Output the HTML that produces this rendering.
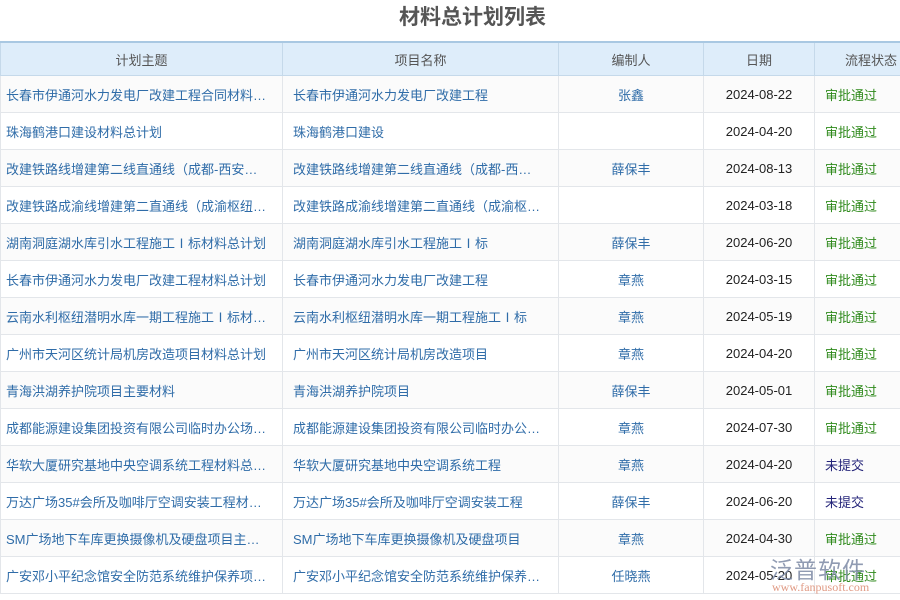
<!DOCTYPE html><html><head><meta charset="utf-8"><style>
body{margin:0;width:900px;height:600px;overflow:hidden;background:#fff;font-family:"Liberation Sans","Noto Sans CJK SC",sans-serif;}
h1{margin:0;height:41px;line-height:36px;text-align:center;font-size:21px;color:#555;font-weight:bold;padding-left:45px}
table{border-collapse:collapse;table-layout:fixed;width:915px;font-size:13px;}
th{background:#deedfa;color:#555;font-weight:normal;height:32px;padding:0;border:1px solid #c5d9ea;border-top:2px solid #a9c8e2}
td{height:36px;border:1px solid #e3e6ea;color:#2f6ca8;white-space:nowrap;overflow:hidden;text-overflow:ellipsis;padding:0 12px 0 5px}
tr:nth-child(even) td{background:#fbfbfb}
td.c{text-align:center;padding:0}td.d{text-align:center;color:#222;padding:0}
td.g{color:#2f8a1c;padding-left:10px}td.u{color:#25257a;padding-left:10px}
td.p{padding-left:10px;padding-right:14px}
.logo{position:absolute;left:770px;top:551px;font-size:23px;color:#7d8aa5;letter-spacing:1px;opacity:.85}
.url{position:absolute;left:772px;top:580px;font-size:12px;color:#e09a84;font-family:"Liberation Serif",serif}
</style></head><body>
<h1>材料总计划列表</h1>
<table><colgroup><col style="width:282px"><col style="width:276px"><col style="width:145px"><col style="width:111px"><col style="width:101px"></colgroup>
<tr><th>计划主题</th><th>项目名称</th><th>编制人</th><th>日期</th><th style="text-align:left;padding-left:30px">流程状态</th></tr>
<tr><td>长春市伊通河水力发电厂改建工程合同材料总计划</td><td class="p">长春市伊通河水力发电厂改建工程</td><td class="c">张鑫</td><td class="d">2024-08-22</td><td class="g">审批通过</td></tr>
<tr><td>珠海鹤港口建设材料总计划</td><td class="p">珠海鹤港口建设</td><td class="c"></td><td class="d">2024-04-20</td><td class="g">审批通过</td></tr>
<tr><td>改建铁路线增建第二线直通线（成都-西安）材料</td><td class="p">改建铁路线增建第二线直通线（成都-西安）</td><td class="c">薛保丰</td><td class="d">2024-08-13</td><td class="g">审批通过</td></tr>
<tr><td>改建铁路成渝线增建第二直通线（成渝枢纽材料</td><td class="p">改建铁路成渝线增建第二直通线（成渝枢纽）</td><td class="c"></td><td class="d">2024-03-18</td><td class="g">审批通过</td></tr>
<tr><td>湖南洞庭湖水库引水工程施工Ⅰ标材料总计划</td><td class="p">湖南洞庭湖水库引水工程施工Ⅰ标</td><td class="c">薛保丰</td><td class="d">2024-06-20</td><td class="g">审批通过</td></tr>
<tr><td>长春市伊通河水力发电厂改建工程材料总计划</td><td class="p">长春市伊通河水力发电厂改建工程</td><td class="c">章燕</td><td class="d">2024-03-15</td><td class="g">审批通过</td></tr>
<tr><td>云南水利枢纽潜明水库一期工程施工Ⅰ标材料总计划</td><td class="p">云南水利枢纽潜明水库一期工程施工Ⅰ标</td><td class="c">章燕</td><td class="d">2024-05-19</td><td class="g">审批通过</td></tr>
<tr><td>广州市天河区统计局机房改造项目材料总计划</td><td class="p">广州市天河区统计局机房改造项目</td><td class="c">章燕</td><td class="d">2024-04-20</td><td class="g">审批通过</td></tr>
<tr><td>青海洪湖养护院项目主要材料</td><td class="p">青海洪湖养护院项目</td><td class="c">薛保丰</td><td class="d">2024-05-01</td><td class="g">审批通过</td></tr>
<tr><td>成都能源建设集团投资有限公司临时办公场所材料</td><td class="p">成都能源建设集团投资有限公司临时办公场所</td><td class="c">章燕</td><td class="d">2024-07-30</td><td class="g">审批通过</td></tr>
<tr><td>华软大厦研究基地中央空调系统工程材料总计划</td><td class="p">华软大厦研究基地中央空调系统工程</td><td class="c">章燕</td><td class="d">2024-04-20</td><td class="u">未提交</td></tr>
<tr><td>万达广场35#会所及咖啡厅空调安装工程材料总计划</td><td class="p">万达广场35#会所及咖啡厅空调安装工程</td><td class="c">薛保丰</td><td class="d">2024-06-20</td><td class="u">未提交</td></tr>
<tr><td>SM广场地下车库更换摄像机及硬盘项目主要材料</td><td class="p">SM广场地下车库更换摄像机及硬盘项目</td><td class="c">章燕</td><td class="d">2024-04-30</td><td class="g">审批通过</td></tr>
<tr><td>广安邓小平纪念馆安全防范系统维护保养项目材料</td><td class="p">广安邓小平纪念馆安全防范系统维护保养项目</td><td class="c">任晓燕</td><td class="d">2024-05-20</td><td class="g">审批通过</td></tr>
</table>
<div class="logo">泛普软件</div><div class="url">www.fanpusoft.com</div>
</body></html>
